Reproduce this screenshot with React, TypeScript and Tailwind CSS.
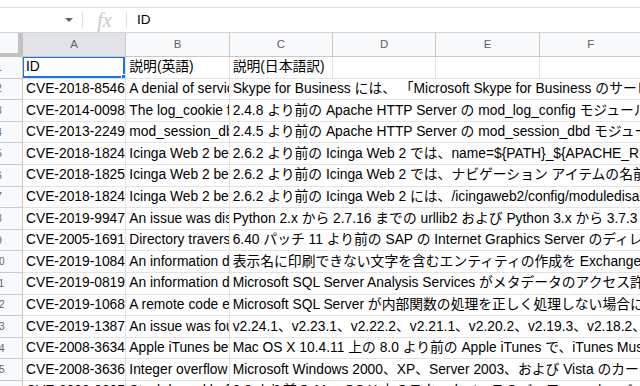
const COLS = ["A", "B", "C", "D", "E", "F"];

const ROWS: [string, string, string][] = [
  ["CVE-2018-8546", "A denial of service vulnerability exists in Skype for Business", "Skype for Business には、 「Microsoft Skype for Business のサービス拒否の脆弱性」が存在します。"],
  ["CVE-2014-0098", "The log_cookie function in mod_log_config.c", "2.4.8 より前の Apache HTTP Server の mod_log_config モジュールの log_cookie 関数は、"],
  ["CVE-2013-2249", "mod_session_dbd.c in the mod_session_dbd module", "2.4.5 より前の Apache HTTP Server の mod_session_dbd モジュールの mod_session_dbd.c は、"],
  ["CVE-2018-18249", "Icinga Web 2 before 2.6.2 allows injection", "2.6.2 より前の Icinga Web 2 では、name=${PATH}_${APACHE_RUN_DIR} のような"],
  ["CVE-2018-18250", "Icinga Web 2 before 2.6.2 allows parameters", "2.6.2 より前の Icinga Web 2 では、ナビゲーション アイテムの名前に"],
  ["CVE-2018-18246", "Icinga Web 2 before 2.6.2 has CSRF", "2.6.2 より前の Icinga Web 2 には、/icingaweb2/config/moduledisable に CSRF が"],
  ["CVE-2019-9947", "An issue was discovered in urllib2 in Python", "Python 2.x から 2.7.16 までの urllib2 および Python 3.x から 3.7.3 までの urllib で"],
  ["CVE-2005-1691", "Directory traversal vulnerability in the Internet Graphics", "6.40 パッチ 11 より前の SAP の Internet Graphics Server のディレクトリ トラバーサル"],
  ["CVE-2019-1084", "An information disclosure vulnerability exists", "表示名に印刷できない文字を含むエンティティの作成を Exchange が許可しない場合に"],
  ["CVE-2019-0819", "An information disclosure vulnerability exists", "Microsoft SQL Server Analysis Services がメタデータのアクセス許可を正しく"],
  ["CVE-2019-1068", "A remote code execution vulnerability exists", "Microsoft SQL Server が内部関数の処理を正しく処理しない場合にリモートで"],
  ["CVE-2019-1387", "An issue was found in Git before v2.24.1", "v2.24.1、v2.23.1、v2.22.2、v2.21.1、v2.20.2、v2.19.3、v2.18.2、v2.17.3 より前の"],
  ["CVE-2008-3634", "Apple iTunes before 8.0 on Mac OS X", "Mac OS X 10.4.11 上の 8.0 より前の Apple iTunes で、iTunes Music Library が"],
  ["CVE-2008-3636", "Integer overflow in the IopfCompleteRequest", "Microsoft Windows 2000、XP、Server 2003、および Vista のカーネル モードで"],
  ["CVE-2008-3635", "Stack-based buffer overflow in QuickTime", "8.0 より前の Mac OS X 上のスタックベースのバッファー オーバーフローにより"],
];

const GRID = "grid grid-cols-[23px_repeat(6,103.33px)]";

export default function App() {
  return (
    <div className="w-[640px] h-[386px] overflow-hidden bg-white font-['Liberation_Sans','Noto_Sans_CJK_JP',sans-serif]">
      {/* ツールバー下端 */}
      <div className="h-[8px] border-b border-[#e0e0e0]" />

      {/* 数式バー */}
      <div className="h-[24px] flex items-center">
        <div className="w-[82px] flex justify-end pr-[9px]">
          <span className="block w-0 h-0 border-l-[4px] border-r-[4px] border-t-[4px] border-l-transparent border-r-transparent border-t-[#5f6368]" />
        </div>
        <div className="w-px h-[16px] bg-[#e0e0e0]" />
        <div className="w-[43px] flex justify-center">
          <span className="font-['Liberation_Serif',serif] italic text-[20px] leading-none text-[#c9c9c9]">fx</span>
        </div>
        <div className="w-px h-[16px] bg-[#e0e0e0]" />
        <span className="ml-[10px] text-[13.5px] text-black">ID</span>
      </div>

      {/* 列見出し */}
      <div className={`${GRID} h-[25px] border-t border-[#d5d5d5]`}>
        <div className="bg-[#f8f9fa] border-r-[5px] border-b-[4px] border-[#c2c2c2]" />
        {COLS.map((c, i) => (
          <div
            key={c}
            className={`flex items-center justify-center text-[11.5px] text-[#5f6368] border-r border-b border-[#c9c9c9] ${
              i === 0 ? "bg-[#e1e3e6]" : "bg-[#f8f9fa]"
            }`}
          >
            {c}
          </div>
        ))}
      </div>

      {/* 1 行目 */}
      <div className={`${GRID} h-[21.6px] text-[13.8px] text-black`}>
        <RowHead n={1} />
        <div className="relative px-[3px] pt-[1px] flex items-center border-r border-b border-[#e2e3e3] overflow-hidden">
          ID
          <div className="absolute inset-0 -left-[1px] -top-[1px] border-2 border-[#1a73e8]" />
          <div className="absolute -right-[3px] -bottom-[3px] w-[7px] h-[7px] bg-[#1a73e8] border border-white" />
        </div>
        <div className="px-[3px] pt-[1px] flex items-center border-r border-b border-[#e2e3e3] whitespace-nowrap overflow-hidden">
          説明(英語)
        </div>
        <div className="px-[3px] pt-[1px] flex items-center border-r border-b border-[#e2e3e3] whitespace-nowrap overflow-hidden">
          説明(日本語訳)
        </div>
        <div className="border-r border-b border-[#e2e3e3]" />
        <div className="border-r border-b border-[#e2e3e3]" />
        <div className="border-r border-b border-[#e2e3e3]" />
      </div>

      {ROWS.map((r, i) => (
        <div key={r[0] + i} className={`${GRID} h-[21.6px] text-[13.8px] text-black`}>
          <RowHead n={i + 2} />
          <div className="px-[3px] pt-[1px] flex items-center border-r border-b border-[#e2e3e3] whitespace-nowrap overflow-hidden">
            {r[0]}
          </div>
          <div className="px-[3px] pt-[1px] flex items-center border-r border-b border-[#e2e3e3] whitespace-nowrap overflow-hidden">
            {r[1]}
          </div>
          <div className="col-span-4 px-[3px] pt-[1px] flex items-center border-b border-[#e2e3e3] whitespace-nowrap overflow-hidden">
            {r[2]}
          </div>
        </div>
      ))}
    </div>
  );
}

function RowHead({ n }: { n: number }) {
  return (
    <div className="bg-[#f8f9fa] border-r border-b border-[#c9c9c9] overflow-hidden flex items-center">
      <div className="w-[42px] shrink-0 -ml-[22px] text-center text-[10px] text-[#5f6368]">{n}</div>
    </div>
  );
}
